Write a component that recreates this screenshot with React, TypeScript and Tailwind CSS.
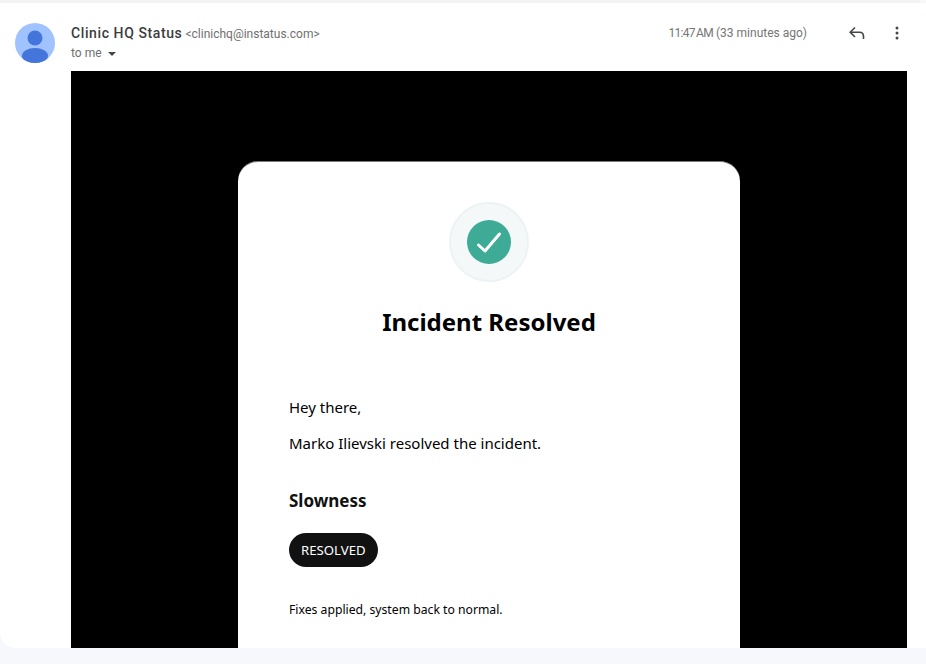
import React from 'react';

function Avatar() {
  return (
    <svg width="40" height="40" viewBox="0 0 40 40">
      <defs>
        <clipPath id="avatar-clip">
          <circle cx="20" cy="20" r="20" />
        </clipPath>
      </defs>
      <g clipPath="url(#avatar-clip)">
        <rect width="40" height="40" fill="#a0c3ff" />
        <circle cx="20" cy="15" r="7.5" fill="#4375db" />
        <ellipse cx="20" cy="33" rx="13" ry="8" fill="#4375db" />
      </g>
    </svg>
  );
}

function ReplyIcon() {
  return (
    <svg width="20" height="20" viewBox="0 0 20 20" fill="none" stroke="#444746" strokeWidth="1.6">
      <path d="M8 4.5 3.2 9.2 8 14" />
      <path d="M3.5 9.2H12.5C15 9.2 16.5 11 16.5 13.2V16" />
    </svg>
  );
}

function MoreIcon() {
  return (
    <svg width="20" height="20" viewBox="0 0 20 20" fill="#444746">
      <circle cx="10" cy="5" r="1.5" />
      <circle cx="10" cy="10" r="1.5" />
      <circle cx="10" cy="15" r="1.5" />
    </svg>
  );
}

function Header() {
  return (
    <div className="flex h-[68px] shrink-0 items-start justify-between font-['Roboto',sans-serif]">
      <div className="pt-5">
        <div className="flex items-baseline gap-[3px] leading-5">
          <span className="text-sm font-medium tracking-[0.6px] text-[#3c3c3c]">Clinic HQ Status</span>
          <span className="text-xs text-[#6f6f6f]">&lt;clinichq@instatus.com&gt;</span>
        </div>
        <div className="mt-[2px] flex items-center gap-[6px] text-xs leading-4 text-[#6f6f6f]">
          <span>to me</span>
          <span className="mt-[1px] h-0 w-0 border-x-4 border-t-4 border-x-transparent border-t-[#444746]" />
        </div>
      </div>
      <div className="flex items-center pt-5 pr-[19px]">
        <span className="mr-[40px] text-xs leading-5 text-[#757575]">
          <span className="tracking-[-0.7px] [word-spacing:-1px]">11:47 AM</span> (33 minutes ago)
        </span>
        <ReplyIcon />
        <span className="ml-[20px]">
          <MoreIcon />
        </span>
      </div>
    </div>
  );
}

function StatusIcon() {
  return (
    <div className="mx-auto flex h-20 w-20 items-center justify-center rounded-full border-2 border-[#edf3f3] bg-[#f4f8f9]">
      <div className="flex h-11 w-11 items-center justify-center rounded-full bg-[#3dab96]">
        <svg width="26" height="26" viewBox="0 0 26 26" fill="none" stroke="#ffffff" strokeWidth="3" strokeLinecap="round" strokeLinejoin="round">
          <path d="M2.5 16 9 22 23.5 5" />
        </svg>
      </div>
    </div>
  );
}

function IncidentCard() {
  return (
    <div className="h-[520px] w-[502px] shrink-0 rounded-t-[20px] border-t border-[#7a7a7a] bg-white px-[51px] pt-[40px] font-['Noto_Sans',sans-serif] text-black">
      <StatusIcon />
      <h1 className="mt-[22px] text-center text-2xl leading-[36px] font-bold">Incident Resolved</h1>
      <p className="mt-[56px] text-[15px] leading-[22px]">Hey there,</p>
      <p className="mt-[14px] text-[15px] leading-[22px]">Marko Ilievski resolved the incident.</p>
      <h2 className="mt-[35px] text-[17px] leading-[24px] font-bold text-[#111111]">Slowness</h2>
      <div className="mt-[20px] flex">
        <span className="flex h-[34px] items-center rounded-full bg-[#111111] px-3 pt-[1px] text-[13.2px] text-white">RESOLVED</span>
      </div>
      <p className="mt-[34px] text-[12.2px] leading-[18px]">Fixes applied, system back to normal.</p>
    </div>
  );
}

export default function App() {
  return (
    <div className="flex h-[664px] w-[926px] flex-col overflow-hidden bg-[#f6f8fc]">
      <div className="h-[3px] w-[920px] shrink-0 bg-[#f3f3f3]" />
      <div className="flex h-[645px] shrink-0 rounded-bl-2xl bg-white">
        <div className="w-[71px] shrink-0 pt-5 pl-[15px]">
          <Avatar />
        </div>
        <div className="flex min-w-0 flex-1 flex-col">
          <Header />
          <div className="mr-[19px] flex flex-1 justify-center overflow-hidden bg-black pt-[90px]">
            <IncidentCard />
          </div>
        </div>
      </div>
    </div>
  );
}
